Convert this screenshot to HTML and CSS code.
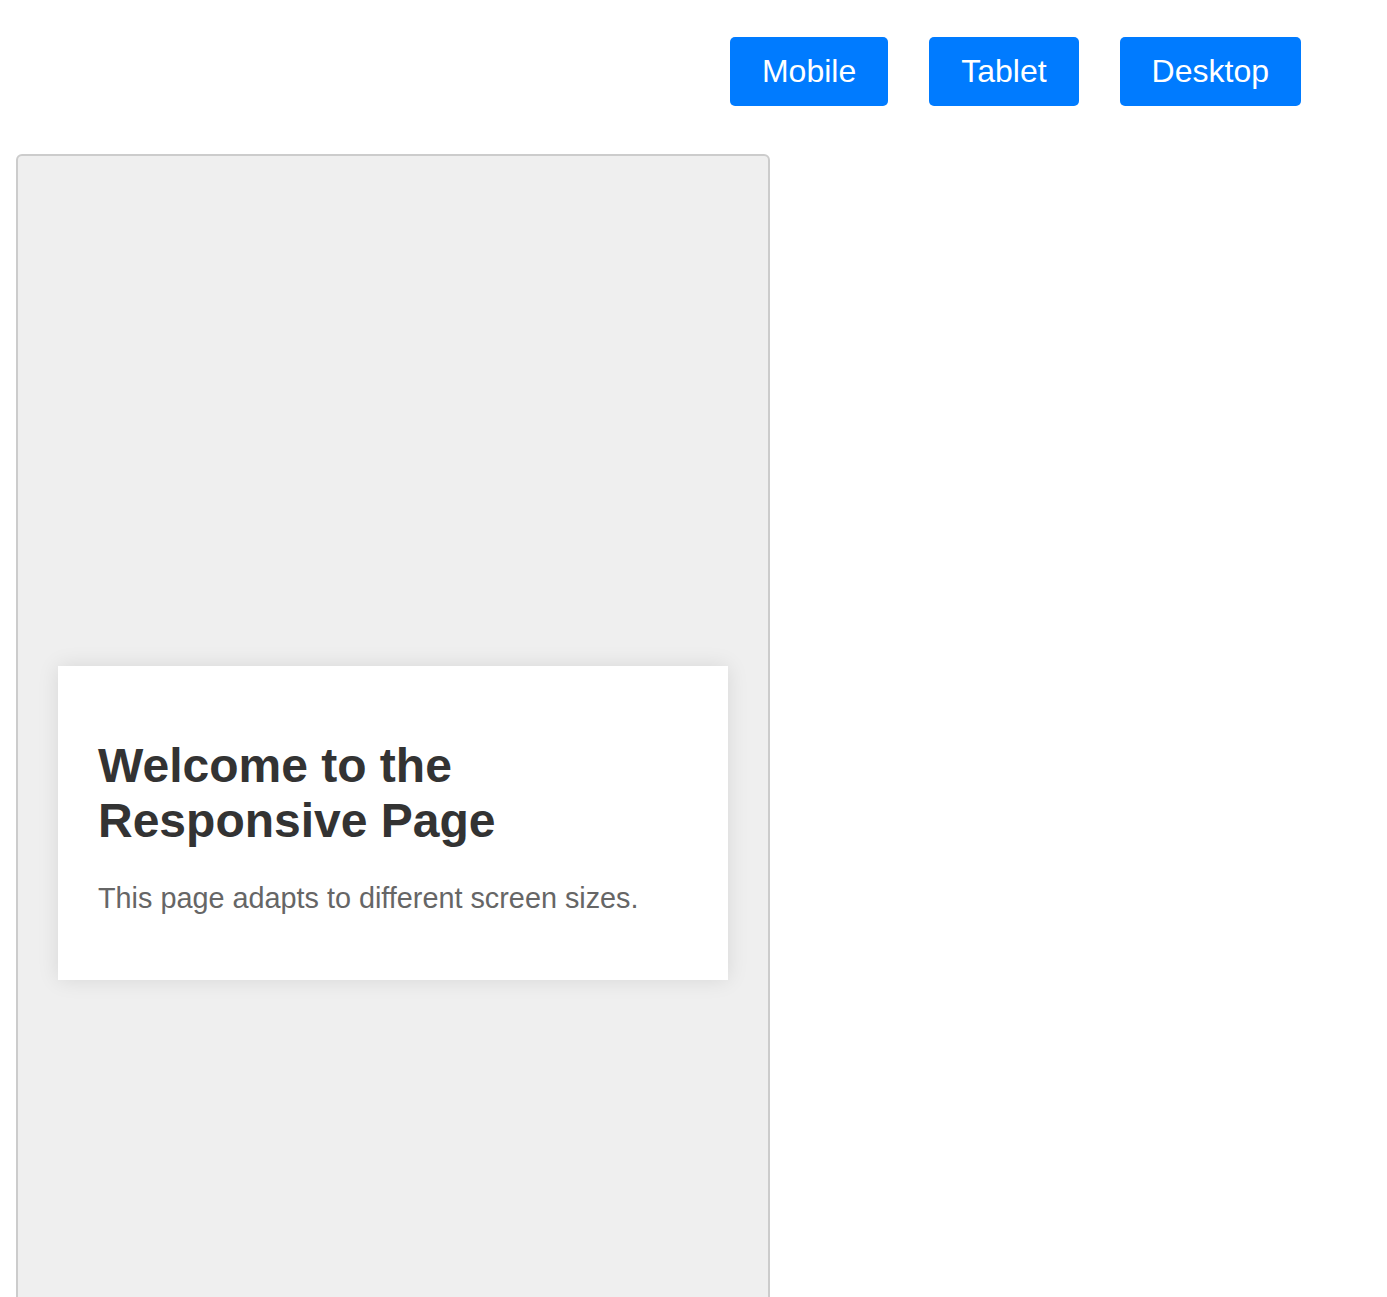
FILE: index.html
```html
<!DOCTYPE html>
<html lang="en">
<head>
<meta charset="utf-8">
<title>Responsive Page</title>
<link rel="stylesheet" href="styles.css">
</head>
<body>
  <div class="controls">
    <button class="btn" type="button">Mobile</button>
    <button class="btn" type="button">Tablet</button>
    <button class="btn" type="button">Desktop</button>
  </div>
  <div class="frame">
    <div class="card">
      <h1 class="title">Welcome to the Responsive Page</h1>
      <p class="lead">This page adapts to different screen sizes.</p>
    </div>
  </div>
</body>
</html>
```

FILE: styles.css
```css
html, body {
  margin: 0;
  padding: 0;
  background: #fff;
}

body {
  font-family: "Liberation Sans", Arial, sans-serif;
  padding: 37px 0 0 16px;
}

.controls {
  display: flex;
  justify-content: flex-end;
  gap: 41px;
  padding-right: 86px;
}

.btn {
  font-family: "Liberation Sans", Arial, sans-serif;
  font-size: 32px;
  line-height: 37px;
  padding: 16px 32px;
  background: #007bff;
  color: #fff;
  border: none;
  border-radius: 5px;
  cursor: pointer;
}

.frame {
  margin-top: 48px;
  width: 754px;
  height: 1338px;
  border: 2px solid #ccc;
  border-radius: 6px;
  background: #efefef;
  box-sizing: border-box;
  display: flex;
  align-items: center;
  padding: 0 40px;
}

.card {
  flex: 1;
  background: #fff;
  padding: 0 40px;
  box-shadow: 0 0 20px rgba(0, 0, 0, 0.1);
  display: flow-root;
}

.title {
  font-size: 48px;
  font-weight: bold;
  color: #333;
  margin: 72px 0 34px;
  line-height: 55px;
}

.lead {
  font-size: 28.8px;
  color: #666;
  margin: 0 0 65px;
  line-height: 33px;
}
```
